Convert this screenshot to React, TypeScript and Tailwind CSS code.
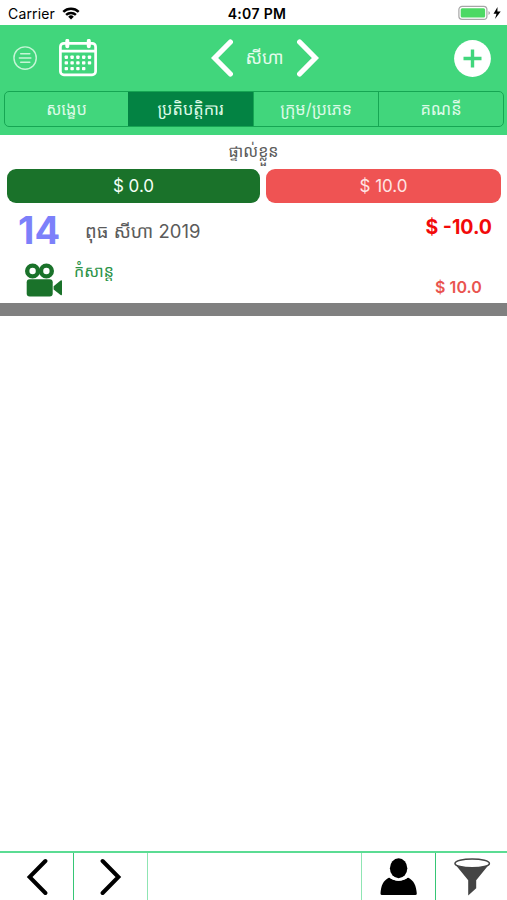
import React from "react";

const khmer = "font-['Inter','Noto_Sans_Khmer','Khmer_OS',sans-serif] whitespace-nowrap";

function Chevron({ flip = false, width = 5.2 }: { flip?: boolean; width?: number }) {
  return (
    <svg viewBox="0 0 22 38" className="h-[38px] w-[22px]" fill="none" stroke="currentColor" strokeWidth={width} strokeLinecap="round" strokeLinejoin="miter">
      <path d={flip ? "M2.6 3 18.4 19 2.6 35" : "M19.4 3 3.6 19 19.4 35"} />
    </svg>
  );
}

function StatusBar() {
  return (
    <div className="flex h-[25px] items-center bg-white pt-[3px] text-black">
      <div className="flex flex-1 items-center gap-[7px] pl-[8px]">
        <span className="text-[14px] leading-4 tracking-[0.15px]">Carrier</span>
        <svg viewBox="0 0 18 13" className="mt-[-2px] h-[13px] w-[18px]" fill="none" stroke="black" strokeWidth="2.5">
          <path d="M1.3 4.8A11.2 11.2 0 0 1 16.7 4.8" />
          <path d="M4.1 7.8A7.2 7.2 0 0 1 13.9 7.8" />
          <path d="M9 12.5 6.2 9.7A4 4 0 0 1 11.8 9.7Z" fill="black" stroke="none" />
        </svg>
      </div>
      <span className="pl-[4px] text-[14px] font-semibold leading-4 tracking-[0.35px]">4:07 PM</span>
      <div className="flex flex-1 items-center justify-end pr-[5px]">
        <svg viewBox="0 0 44 16" className="mt-[-2px] h-[16px] w-[44px]">
          <rect x=".9" y="1.4" width="28" height="13" rx="3.2" fill="white" stroke="#a6a6a6" strokeWidth="1.2" />
          <rect x="2.7" y="3.2" width="24.4" height="9.4" rx="1.5" fill="#4cd964" />
          <path d="M30.5 6v4q1.5-.8 1.5-2t-1.5-2" fill="#a6a6a6" />
          <path d="M39.5 2 35.5 8.7h3L37 14l5.7-7.4h-3.3Z" fill="black" />
        </svg>
      </div>
    </div>
  );
}

function CalendarIcon() {
  const dots = [0, 1, 2].flatMap((r) => [0, 1, 2, 3, 4].filter((c) => r < 2 || c < 4).map((c) => [c, r]));
  return (
    <svg viewBox="0 0 38 38" className="h-[38px] w-[38px]" fill="none" stroke="white" strokeWidth="2.7">
      <rect x="1.4" y="4.3" width="35.2" height="31.6" rx="3.5" />
      <path d="M1.4 12.2h35.2" />
      <path d="M8.3 1.8v5.5M29.8 1.8v5.5" strokeWidth="4" strokeLinecap="round" />
      {dots.map(([c, r]) => (
        <rect key={`${c}-${r}`} x={5.6 + c * 5.8} y={16.5 + r * 5.7} width="3.4" height="3.4" rx=".8" fill="white" stroke="none" />
      ))}
    </svg>
  );
}

function Header() {
  const tabs = ["សង្ខេប", "ប្រតិបត្តិការ", "ក្រុម/ប្រភេទ", "គណនី"];
  return (
    <header className="h-[110px] bg-[#41d67c] text-white">
      <div className="grid h-[66px] grid-cols-3 items-center">
        <div className="flex items-center gap-[21px] pl-[13px]">
          <svg viewBox="0 0 26 26" className="h-[26px] w-[25px]" fill="none" stroke="#c5f5d6" strokeWidth="1.5" strokeLinecap="round">
            <circle cx="12.6" cy="13" r="11.6" />
            <path d="M8 8.5h9.5M6.6 13h12M8 17.5h9.5" />
          </svg>
          <CalendarIcon />
        </div>
        <div className="flex items-center justify-center gap-[12px] pl-[22px]">
          <Chevron />
          <span className={`${khmer} flex w-[40px] justify-center pb-px text-[17.8px] leading-6 text-[#e4fbec]`}>សីហា</span>
          <Chevron flip />
        </div>
        <div className="flex justify-end pr-[16px]">
          <svg viewBox="0 0 37 37" className="h-[37px] w-[37px]">
            <circle cx="18.5" cy="18.5" r="18.4" fill="white" />
            <path d="M18.5 9.5v18M9.5 18.5h18" stroke="#41d67c" strokeWidth="3.4" />
          </svg>
        </div>
      </div>
      <div className="mr-[3px] ml-[4px] grid h-[36px] grid-cols-[123px_125px_125px_1fr] overflow-hidden rounded-[5px] border-[1.5px] border-[#16a653]">
        {tabs.map((t, i) => (
          <div
            key={t}
            className={`${khmer} flex items-center justify-center border-[#16a653] pb-px text-[16.4px] leading-6 text-[#dcfae6] ${i === 1 ? "bg-[#038343]" : ""} ${i > 1 ? "border-l" : ""}`}
          >
            {t}
          </div>
        ))}
      </div>
    </header>
  );
}

function CameraIcon() {
  return (
    <svg viewBox="0 0 38 34" className="h-[34px] w-[38px]" fill="#1a722a">
      <circle cx="7.6" cy="8" r="5.4" fill="none" stroke="#1a722a" strokeWidth="4.4" />
      <circle cx="21.4" cy="8" r="5.4" fill="none" stroke="#1a722a" strokeWidth="4.4" />
      <rect x="1.7" y="16.2" width="26" height="17.3" rx="3" />
      <path d="M28.6 23.2 35.6 17.4q1.4-.8 1.4.8v13q0 1.6-1.4.8l-7-5.4Z" />
    </svg>
  );
}

export default function App() {
  return (
    <div className="flex h-[900px] w-[507px] flex-col overflow-hidden bg-white font-['Inter',sans-serif]">
      <StatusBar />
      <Header />
      <main className="flex-1">
        <div className={`${khmer} flex h-[34px] items-center justify-center pb-[3px] text-[16px] leading-6 text-[#5b5b5b]`}>ផ្ទាល់ខ្លួន</div>
        <div className="flex h-[34px] gap-[6px] pr-[6px] pl-[7px] text-[17px] text-[#f4fff6]">
          <div className="flex w-[253px] items-center justify-center rounded-[9px] bg-[#1a722a] pt-[2px]">$ 0.0</div>
          <div className="flex flex-1 items-center justify-center rounded-[9px] bg-[#ef5353] pt-[2px] text-[#ffe4e4]">$ 10.0</div>
        </div>
        <div className="flex h-[52px] items-center pr-[15px] pl-[18px]">
          <span className="w-[67px] pt-px text-[38px] leading-none font-bold text-[#7c80fa]">14</span>
          <span className={`${khmer} mt-[3px] text-[18.5px] leading-7 text-[#5b5b5b]`}>ពុធ សីហា 2019</span>
          <span className="mt-[-2px] ml-auto text-[19.5px] font-bold text-[#f20a0a]">$ -10.0</span>
        </div>
        <div className="flex h-[48px] items-start pr-[25px] pl-[25px] pt-[8px]">
          <CameraIcon />
          <span className={`${khmer} mt-[-4px] ml-[11px] text-[16px] leading-6 text-[#2a9246]`}>កំសាន្ត</span>
          <span className="mt-[12px] ml-auto text-[16px] leading-6 font-semibold tracking-[0.1px] text-[#e9544f]">$ 10.0</span>
        </div>
        <div className="h-[13px] bg-[#808080]" />
      </main>
      <footer className="flex h-[49px] border-t-2 border-t-[#5bdc93] text-black">
        <div className="flex w-[74px] items-center justify-center pr-px">
          <Chevron width={4} />
        </div>
        <div className="-ml-px w-px bg-[#36c675]" />
        <div className="flex w-[74px] items-center justify-center">
          <Chevron flip width={4} />
        </div>
        <div className="-ml-px w-px bg-[#8fe5b3]" />
        <div className="flex-1" />
        <div className="w-px bg-[#8fe5b3]" />
        <div className="flex w-[73px] items-center justify-center">
          <svg viewBox="0 0 38 38" className="h-[38px] w-[38px]">
            <ellipse cx="18.6" cy="10.3" rx="8.7" ry="10" />
            <path d="M.5 35.5C1 28 3 22.5 9.3 19.6c5 4.2 13.6 4.2 18.6 0C34 22.5 36.2 28 36.8 35.5q0 1.5-1.5 1.5H2Q.5 37 .5 35.5Z" />
            <path d="M9.3 18.4c5 4.6 13.6 4.6 18.6 0" fill="none" stroke="white" strokeWidth="1.6" />
          </svg>
        </div>
        <div className="w-px bg-[#36c675]" />
        <div className="flex w-[71px] items-center justify-center">
          <svg viewBox="0 0 38 38" className="h-[38px] w-[38px]">
            <path d="M1.5 5.5 15.2 22.2V37.5l8-7.2v-8.1L36.8 5.5Z" fill="#444" />
            <ellipse cx="19.2" cy="5.4" rx="17.2" ry="4.4" fill="white" stroke="#444" strokeWidth="1.5" />
          </svg>
        </div>
      </footer>
    </div>
  );
}
